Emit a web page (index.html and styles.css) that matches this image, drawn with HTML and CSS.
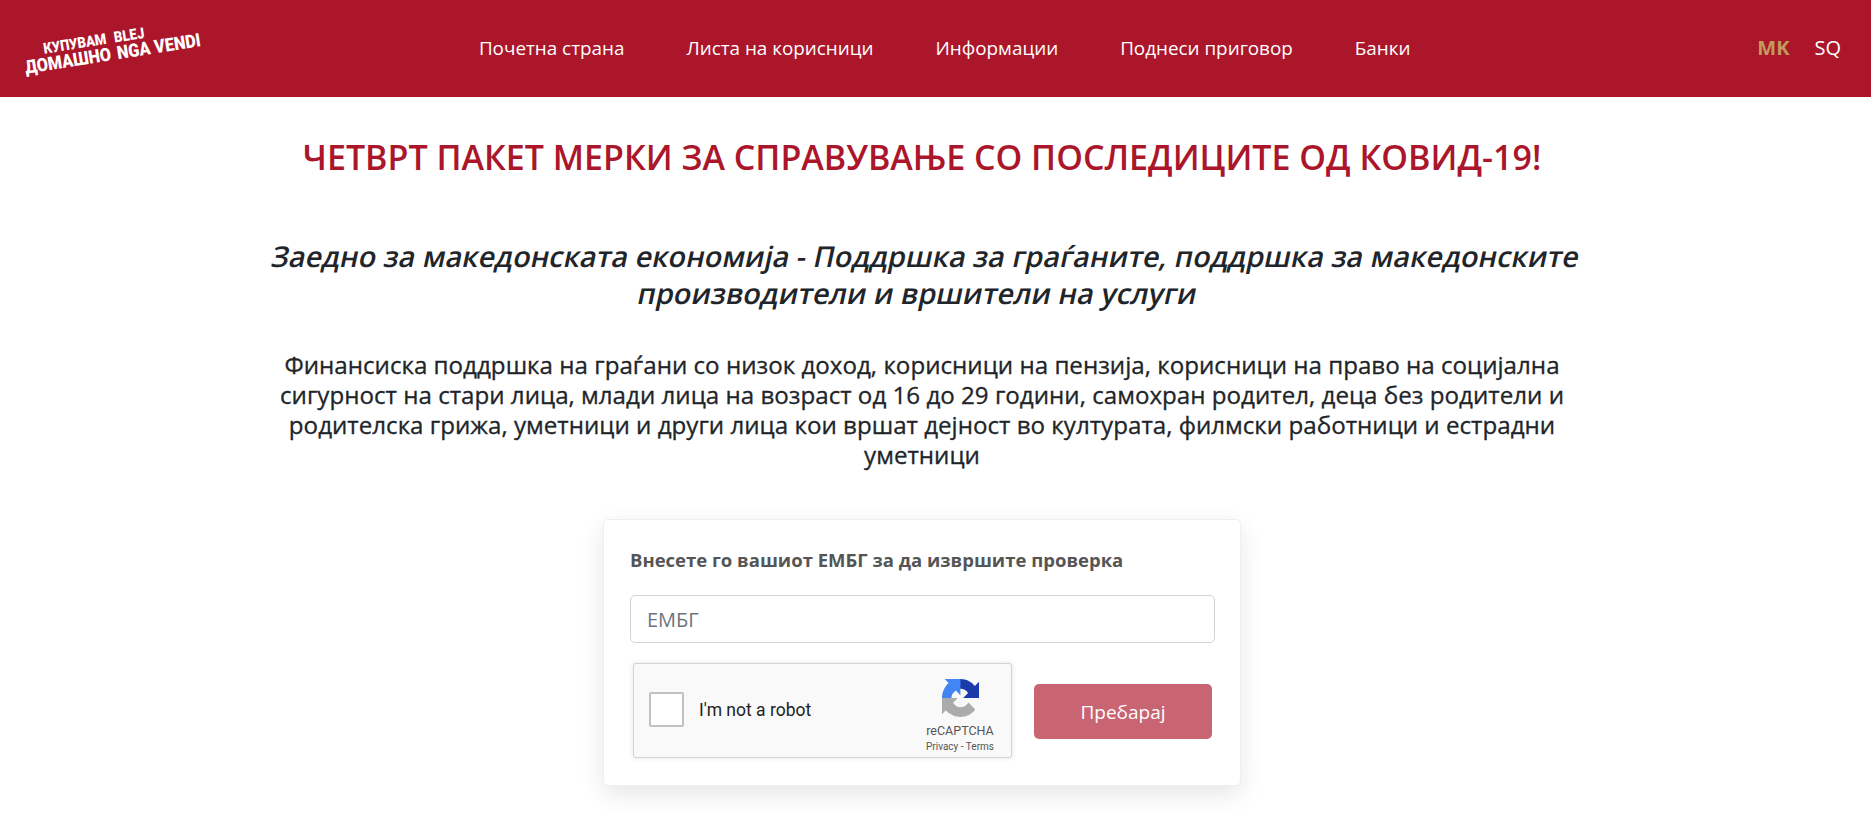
FILE: index.html
```html
<!DOCTYPE html>
<html lang="mk">
  <head>
    <meta charset="UTF-8" />
    <title>Купувам домашно</title>
    <link rel="stylesheet" href="styles.css">
  </head>
  <body>
    <header class="top-bar">
      <a class="logo" href="#">
        <span class="logo-line logo-small"><span>КУПУВАМ</span><span>BLEJ</span></span>
        <span class="logo-line logo-big"><span>ДОМАШНО</span><span>NGA VENDI</span></span>
      </a>
      <nav class="main-nav">
        <a href="#">Почетна страна</a>
        <a href="#">Листа на корисници</a>
        <a href="#">Информации</a>
        <a href="#">Поднеси приговор</a>
        <a href="#">Банки</a>
      </nav>
      <div class="lang-nav">
        <a class="active" href="#">MK</a>
        <a href="#">SQ</a>
      </div>
    </header>

    <main class="content">
      <h1>ЧЕТВРТ ПАКЕТ МЕРКИ ЗА СПРАВУВАЊЕ СО ПОСЛЕДИЦИТЕ ОД КОВИД-19!</h1>
      <h2>Заедно за македонската економија - Поддршка за граѓаните, поддршка за македонските производители и вршители на услуги</h2>
      <p class="lead">Финансиска поддршка на граѓани со низок доход, корисници на пензија, корисници на право на социјална сигурност на стари лица, млади лица на возраст од 16 до 29 години, самохран родител, деца без родители и родителска грижа, уметници и други лица кои вршат дејност во културата, филмски работници и естрадни уметници</p>

      <form class="check-card">
        <label class="check-label" for="embg">Внесете го вашиот ЕМБГ за да извршите проверка</label>
        <input id="embg" class="check-input" type="text" placeholder="ЕМБГ" />
        <div class="check-row">
          <div class="captcha">
            <span class="captcha-box"></span>
            <span class="captcha-text">I'm not a robot</span>
            <div class="captcha-brand">
              <svg class="captcha-icon" viewBox="0 0 64 64" width="37" height="38" preserveAspectRatio="none">
                <path fill="#1c3aa9" d="M64 31.955l-.033-1.37V4.687l-7.16 7.16C50.948 4.674 42.033.093 32.05.093c-10.4 0-19.622 4.96-25.458 12.64l11.736 11.86a15.55 15.55 0 0 1 4.754-5.334c2.05-1.6 4.952-2.906 8.968-2.906.485 0 .86.057 1.135.163 4.976.393 9.288 3.14 11.828 7.124l-8.307 8.307 26.287.001"/>
                <path fill="#4285f4" d="M31.862.094l-1.37.033H4.594l7.16 7.16C4.58 13.147 0 22.06 0 32.046c0 10.4 4.96 19.622 12.64 25.458l11.86-11.736a15.55 15.55 0 0 1-5.334-4.754c-1.6-2.05-2.906-4.952-2.906-8.968 0-.485.057-.86.163-1.135.393-4.976 3.14-9.288 7.124-11.828l8.307 8.307.001-26.287"/>
                <path fill="#ababab" d="M.001 32.045l.033 1.37v25.898l7.16-7.16c5.86 7.173 14.774 11.754 24.76 11.754 10.4 0 19.622-4.96 25.458-12.64l-11.736-11.86a15.55 15.55 0 0 1-4.754 5.334c-2.05 1.6-4.952 2.906-8.968 2.906-.485 0-.86-.057-1.135-.163-4.976-.393-9.288-3.14-11.828-7.124l8.307-8.307-26.287-.001"/>
              </svg>
              <span class="captcha-name">reCAPTCHA</span>
              <span class="captcha-links">Privacy - Terms</span>
            </div>
          </div>
          <button class="check-button" type="button">Пребарај</button>
        </div>
      </form>
    </main>
  </body>
</html>
```

FILE: styles.css
```css
* {
  box-sizing: border-box;
}

body {
  margin: 0;
  font-family: "Open Sans", sans-serif;
  color: #212529;
  background: #fff;
  height: 834px;
  overflow: hidden;
}

a {
  text-decoration: none;
  color: #fff;
}

.top-bar {
  height: 97px;
  background: #ab162b;
  display: flex;
  align-items: center;
  padding: 0 30px 0 24px;
}

.logo {
  width: 178px;
  display: flex;
  flex-direction: column;
  transform: rotate(-9deg) scaleX(0.88);
  transform-origin: left center;
  font-family: Roboto, sans-serif;
  font-weight: 900;
  margin-top: 25px;
  line-height: 1;
}

.logo-line {
  display: flex;
  white-space: nowrap;
}

.logo-small {
  font-size: 15px;
  padding-left: 24px;
  gap: 9px;
}

.logo-big {
  font-size: 18.5px;
  gap: 7px;
  margin-top: -1px;
}

.main-nav {
  flex: 1;
  display: flex;
  justify-content: center;
  gap: 62px;
  font-size: 18.85px;
  margin-left: -70px;
  margin-top: -2px;
}

.lang-nav {
  display: flex;
  gap: 25px;
  font-size: 20px;
  margin-top: -2px;
}

.lang-nav .active {
  color: #c29b5b;
  font-weight: 700;
}

.content {
  display: flex;
  flex-direction: column;
  align-items: center;
  padding-right: 27px;
}

h1 {
  margin: 37px 0 0;
  font-size: 34px;
  line-height: 46px;
  font-weight: 600;
  color: #ab162b;
}

h2 {
  margin: 57px 0 0;
  width: 1330px;
  text-align: center;
  font-size: 28.8px;
  line-height: 37px;
  font-weight: 600;
  transform: skewX(-12deg);
}

.lead {
  margin: 39px 0 0;
  width: 1300px;
  text-align: center;
  font-size: 24.15px;
  line-height: 30px;
  font-weight: 400;
  -webkit-text-stroke: 0.3px #212529;
}

.check-card {
  margin-top: 49px;
  width: 638px;
  height: 267px;
  padding: 26px 25px 26px 26px;
  background: #fff;
  border: 1px solid #efefef;
  border-radius: 5px;
  box-shadow: 0 8px 24px rgba(0, 0, 0, 0.1);
  display: flex;
  flex-direction: column;
}

.check-label {
  font-size: 18.5px;
  line-height: 28px;
  font-weight: 700;
  color: #555;
}

.check-input {
  margin-top: 21px;
  height: 48px;
  width: 100%;
  padding: 0 16px;
  border: 1px solid #ced4da;
  border-radius: 5px;
  font-family: "Open Sans", sans-serif;
  font-size: 20px;
  color: #495057;
}

.check-input::placeholder {
  color: #6c757d;
}

.check-row {
  margin-top: 20px;
  padding-left: 3px;
  display: flex;
  align-items: flex-start;
  gap: 22px;
}

.captcha {
  width: 379px;
  height: 95px;
  padding: 0 16px;
  background: #f9f9f9;
  border: 1px solid #d3d3d3;
  border-radius: 3px;
  box-shadow: 0 0 4px 1px rgba(0, 0, 0, 0.08);
  display: flex;
  align-items: center;
  font-family: Roboto, sans-serif;
}

.captcha-box {
  width: 35px;
  height: 35px;
  margin-left: -1px;
  margin-top: -3px;
  background: #fff;
  border: 2px solid #c1c1c1;
  border-radius: 2px;
}

.captcha-text {
  margin-left: 15px;
  margin-top: -2px;
  font-size: 17.5px;
  color: #222;
}

.captcha-brand {
  margin-left: auto;
  width: 72px;
  display: flex;
  flex-direction: column;
  align-items: center;
  margin-right: -1px;
  margin-top: 11px;
  color: #555;
}

.captcha-name {
  margin-top: 6px;
  font-size: 12.5px;
  line-height: 15px;
}

.captcha-links {
  margin-top: 2px;
  font-size: 10px;
  line-height: 14px;
  white-space: nowrap;
}

.check-button {
  margin-top: 21px;
  width: 178px;
  height: 55px;
  border: 0;
  border-radius: 5px;
  background: #c96473;
  color: #fff;
  font-family: "Open Sans", sans-serif;
  font-size: 19px;
}
```
